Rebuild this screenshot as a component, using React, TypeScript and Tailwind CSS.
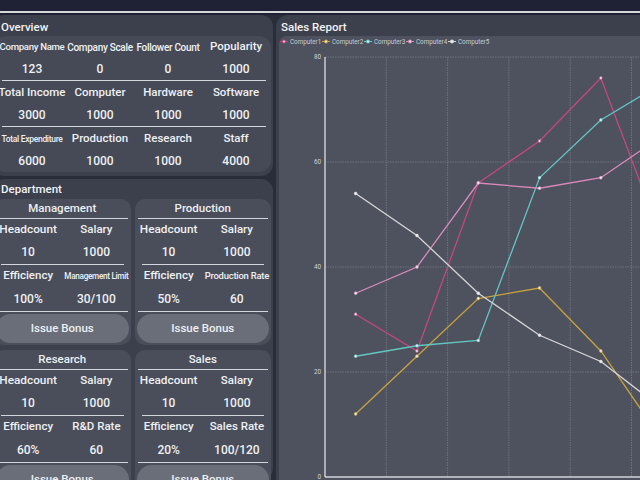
import React from "react";

type Cell = { label: string; value: string; size: string };

const overviewRows: Cell[][] = [
  [
    { label: "Company Name", value: "123", size: "text-[9.6px] tracking-[-0.3px]" },
    { label: "Company Scale", value: "0", size: "text-[10px] tracking-[-0.3px]" },
    { label: "Follower Count", value: "0", size: "text-[10px] tracking-[-0.3px]" },
    { label: "Popularity", value: "1000", size: "text-[11.5px]" },
  ],
  [
    { label: "Total Income", value: "3000", size: "text-[11.5px]" },
    { label: "Computer", value: "1000", size: "text-[11.5px]" },
    { label: "Hardware", value: "1000", size: "text-[11.5px]" },
    { label: "Software", value: "1000", size: "text-[11.5px]" },
  ],
  [
    { label: "Total Expenditure", value: "6000", size: "text-[8.5px] tracking-[-0.3px]" },
    { label: "Production", value: "1000", size: "text-[11.5px]" },
    { label: "Research", value: "1000", size: "text-[11.5px]" },
    { label: "Staff", value: "4000", size: "text-[11.5px]" },
  ],
];

const departments = [
  { name: "Management", eff: "100%", rateLabel: "Management Limit", rate: "30/100", rateSize: "text-[8.2px] tracking-[-0.3px]" },
  { name: "Production", eff: "50%", rateLabel: "Production Rate", rate: "60", rateSize: "text-[9.4px] tracking-[-0.2px]" },
  { name: "Research", eff: "60%", rateLabel: "R&D Rate", rate: "60", rateSize: "text-[11.5px]" },
  { name: "Sales", eff: "20%", rateLabel: "Sales Rate", rate: "100/120", rateSize: "text-[11.5px]" },
];

const series = [
  { name: "Computer1", color: "#c4487f", data: [31, 24, 56, 64, 76, 45] },
  { name: "Computer2", color: "#c9a23e", data: [12, 23, 34, 36, 24, 7] },
  { name: "Computer3", color: "#63c6c2", data: [23, 25, 26, 57, 68, 75] },
  { name: "Computer4", color: "#d88bbb", data: [35, 40, 56, 55, 57, 65] },
  { name: "Computer5", color: "#d6d6d8", data: [54, 46, 35, 27, 22, 13] },
];

const px = (i: number) => 325 + 61.3 * i + 30.65;
const py = (v: number) => 477 - v * 5.25;

function DeptCard({ d }: { d: (typeof departments)[number] }) {
  return (
    <div className="flex flex-col rounded-[10px] bg-[#4a4e5a] pb-[2px]">
      <div className="flex h-[19px] items-center justify-center text-[11.5px] font-medium text-[#eceef2]">{d.name}</div>
      <div className="mx-[3px] h-px bg-[#d3d6dc]" />
      <div className="grid grid-cols-2 text-center font-medium text-[#eef0f3]">
        <div className="flex h-[21px] items-center justify-center text-[11.8px]">Headcount</div>
        <div className="flex h-[21px] items-center justify-center text-[11.5px]">Salary</div>
        <div className="flex h-[23px] items-center justify-center text-[12px]">10</div>
        <div className="flex h-[23px] items-center justify-center text-[12px]">1000</div>
      </div>
      <div className="mx-[7px] mt-[1px] h-px bg-[#d3d6dc]" />
      <div className="grid grid-cols-2 text-center font-medium text-[#eef0f3]">
        <div className="flex h-[22px] items-center justify-center text-[11.5px]">Efficiency</div>
        <div className={`flex h-[22px] items-center justify-center whitespace-nowrap ${d.rateSize}`}>{d.rateLabel}</div>
        <div className="flex h-[23px] items-center justify-center text-[12px]">{d.eff}</div>
        <div className="flex h-[23px] items-center justify-center text-[12px]">{d.rate}</div>
      </div>
      <div className="mx-[3px] mt-[1px] h-px bg-[#d3d6dc]" />
      <button className="mx-[2px] mt-[2px] h-[29px] rounded-full bg-[#6a6e79] text-[11.5px] font-medium text-[#eceef2]">
        Issue Bonus
      </button>
    </div>
  );
}

function Chart() {
  return (
    <svg width={361} height={444} viewBox="279 36 361 444" className="block">
      {series.map((s, i) => {
        const x = 284 + i * 42;
        return (
          <g key={s.name}>
            <line x1={x - 4} y1={41.5} x2={x + 4} y2={41.5} stroke={s.color} strokeWidth={1} />
            <circle cx={x} cy={41.5} r={2} fill={s.color} />
            <circle cx={x} cy={41.5} r={0.9} fill="#f4f4f6" />
            <text x={x + 6} y={43.8} fontSize={6.3} fill="#c9cbd1" fontFamily="Roboto, sans-serif">
              {s.name}
            </text>
          </g>
        );
      })}
      {[80, 60, 40, 20].map((v) => (
        <line key={v} x1={325} y1={py(v)} x2={640} y2={py(v)} stroke="#737782" strokeWidth={0.9} strokeDasharray="1.5 1" />
      ))}
      {[1, 2, 3, 4, 5].map((i) => (
        <line key={i} x1={325 + 61.3 * i} y1={57} x2={325 + 61.3 * i} y2={477} stroke="#737782" strokeWidth={0.9} strokeDasharray="1.5 1" />
      ))}
      <line x1={325} y1={57} x2={325} y2={477} stroke="#d2d5db" strokeWidth={1.4} />
      <line x1={325} y1={477} x2={640} y2={477} stroke="#d2d5db" strokeWidth={1.4} />
      {[80, 60, 40, 20, 0].map((v) => (
        <text key={v} x={321} y={py(v) + 2.2} fontSize={6.3} fill="#d0d2d7" textAnchor="end" fontFamily="Roboto, sans-serif">
          {v}
        </text>
      ))}
      {series.map((s) => (
        <g key={s.name}>
          <polyline
            points={s.data.map((v, i) => `${px(i)},${py(v)}`).join(" ")}
            fill="none"
            stroke={s.color}
            strokeWidth={1.3}
          />
          {s.data.map((v, i) => (
            <circle key={i} cx={px(i)} cy={py(v)} r={1.4} fill="#f2f2f4" stroke={s.color} strokeWidth={0.6} />
          ))}
        </g>
      ))}
    </svg>
  );
}

export default function App() {
  return (
    <div className="flex h-[480px] w-[640px] flex-col overflow-hidden bg-[#292d3a] font-['Roboto',sans-serif]">
      <div className="h-[11px] shrink-0 bg-[#1e2234]" />
      <div className="h-[2px] shrink-0 bg-[#d4d7de]" />
      <div className="h-[2px] shrink-0 bg-[#1e2234]" />
      <div className="flex min-h-0 flex-1 gap-[3px]">
        <div className="-ml-[8px] flex w-[281px] shrink-0 flex-col gap-[3px]">
          <div className="flex h-[161px] shrink-0 flex-col rounded-[12px] bg-[#3c404d] px-[2px]">
            <div className="flex h-[21px] items-center pl-[7px] pt-[4px] text-[11.5px] font-medium text-[#f1f2f5]">Overview</div>
            <div className="flex flex-col rounded-[12px] bg-[#464a57] pl-[4px] pr-[1px]">
              {overviewRows.map((row, r) => (
                <div key={r} className="flex flex-col">
                  {r > 0 && (
                    <div className="h-[2px] pl-[4px] pr-[4px]">
                      <div className="h-px bg-[#d3d6dc]" />
                    </div>
                  )}
                  <div className="grid grid-cols-4 text-center font-medium text-[#eef0f3]">
                    {row.map((c) => (
                      <div key={c.label} className={`flex h-[22px] items-center justify-center whitespace-nowrap ${c.size}`}>
                        {c.label}
                      </div>
                    ))}
                    {row.map((c) => (
                      <div key={c.label + "v"} className="flex h-[22px] items-center justify-center text-[12px]">
                        {c.value}
                      </div>
                    ))}
                  </div>
                </div>
              ))}
            </div>
          </div>
          <div className="flex min-h-0 flex-1 flex-col rounded-[12px] bg-[#3c404d] px-[2px]">
            <div className="flex h-[20px] shrink-0 items-center pl-[7px] pt-[2px] text-[11.5px] font-medium text-[#f1f2f5]">Department</div>
            <div className="grid grid-cols-2 gap-x-[4px] gap-y-[5px]">
              {departments.map((d) => (
                <DeptCard key={d.name} d={d} />
              ))}
            </div>
          </div>
        </div>
        <div className="flex min-w-0 flex-1 flex-col rounded-tl-[12px] bg-[#3c404d] pl-[3px]">
          <div className="flex h-[21px] shrink-0 items-center pl-[2px] pt-[4px] text-[11.5px] font-medium text-[#f1f2f5]">Sales Report</div>
          <div className="flex-1 overflow-hidden rounded-tl-[8px] bg-[#4e525e]">
            <Chart />
          </div>
        </div>
      </div>
    </div>
  );
}
